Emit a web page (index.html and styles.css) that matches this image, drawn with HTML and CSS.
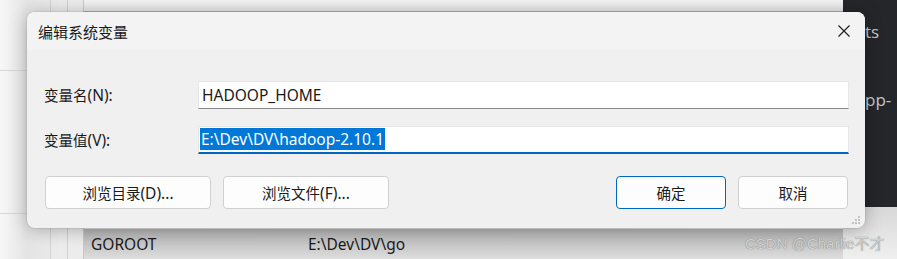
FILE: index.html
```html
<!DOCTYPE html>
<html>
	<head>
		<meta charset="utf-8" />
		<title>编辑系统变量</title>
		<link rel="stylesheet" href="styles.css">
	</head>
	<body>
		<div class="desk">
			<!-- 背景里的环境变量窗口 -->
			<div class="list">
				<div class="list_head"></div>
				<div class="col c1"></div>
				<div class="col c2"></div>
				<div class="col c3"></div>
				<div class="hline h1"></div>
				<div class="hline h2"></div>
			</div>
			<div class="side">
				<span class="side_t1">ts</span>
				<span class="side_t2">pp-</span>
			</div>
			<div class="side_low"></div>
			<div class="row">
				<span class="row_name">GOROOT</span>
				<span class="row_val">E:\Dev\DV\go</span>
			</div>

			<!-- 对话框 -->
			<div class="dialog">
				<div class="dialog_title">
					<span>编辑系统变量</span>
					<svg class="close" width="12" height="12" viewBox="0 0 12 12">
						<path d="M0.5 0.5 L11.5 11.5 M11.5 0.5 L0.5 11.5" stroke="#1a1a1a" stroke-width="1.1" fill="none"/>
					</svg>
				</div>
				<div class="form">
					<label>变量名<span class="en">(N):</span></label>
					<div class="field">HADOOP_HOME</div>
					<label>变量值<span class="en">(V):</span></label>
					<div class="field focus"><span class="sel">E:\Dev\DV\hadoop-2.10.1</span></div>
				</div>
				<div class="btns">
					<button class="btn wide">浏览目录<span class="en">(D)...</span></button>
					<button class="btn wide">浏览文件<span class="en">(F)...</span></button>
					<button class="btn ok">确定</button>
					<button class="btn">取消</button>
				</div>
				<svg class="grip" width="10" height="10" viewBox="0 0 10 10">
					<rect x="7" y="1" width="2" height="2" fill="#c4c4c4"/>
					<rect x="4" y="4" width="2" height="2" fill="#c4c4c4"/>
					<rect x="7" y="4" width="2" height="2" fill="#c4c4c4"/>
					<rect x="1" y="7" width="2" height="2" fill="#c4c4c4"/>
					<rect x="4" y="7" width="2" height="2" fill="#c4c4c4"/>
					<rect x="7" y="7" width="2" height="2" fill="#c4c4c4"/>
				</svg>
			</div>

			<div class="mark">CSDN @Charlie不才</div>
		</div>
	</body>
</html>
```
FILE: styles.css
```css
*{margin: 0;padding: 0;box-sizing: border-box;}
body{width: 897px;height: 259px;overflow: hidden;background: #f4f4f4;
	font-family: "Noto Sans", "Noto Sans CJK SC", sans-serif;font-size: 14.5px;color: #1a1a1a;}
.en{font-size: 15.5px;}
.desk{position: relative;width: 897px;height: 259px;overflow: hidden;
	background: linear-gradient(90deg, #f7f7f7 0, #e4e4e4 27px, #ececec 60px, #f3f3f3 100%);}

/* 背景窗口 */
.list{position: absolute;left: 0;top: 0;width: 843px;height: 259px;}
.list_head{position: absolute;left: 83px;top: 0;right: 0;height: 12px;
	background: linear-gradient(#f4f4f4, #e6e6e6);border-bottom: 1px solid #b4b4b4;}
.col{position: absolute;top: 0;bottom: 0;width: 1px;background: #d2d2d2;}
.c1{left: 50px;}
.c2{left: 67px;}
.c3{left: 83px;background: #c8c8c8;}
.hline{position: absolute;left: 0;width: 50px;height: 1px;background: #d6d6d6;}
.h1{top: 70px;}
.h2{top: 213px;}
.side{position: absolute;left: 843px;top: 0;width: 54px;height: 207px;background: #25262a;
	font-family: "Open Sans", sans-serif;font-size: 17px;color: #c3c6cc;}
.side_t1{position: absolute;left: 22px;top: 20px;}
.side_t2{position: absolute;left: 22px;top: 88px;}
.side_low{position: absolute;left: 843px;top: 207px;width: 54px;height: 52px;
	background: linear-gradient(#d8d8d8, #efefef);}
.row{position: absolute;left: 84px;top: 229px;width: 759px;height: 30px;font-size: 15.5px;
	background: linear-gradient(#b4b4b4, #cfcfcf 70%, #dedede);display: flex;align-items: center;}
.row_name{margin-left: 7px;width: 217px;}
.mark{position: absolute;left: 745px;top: 232px;font-family: "Liberation Sans", "Noto Sans CJK SC", sans-serif;
	font-size: 15px;color: #d2d2d2;text-shadow: 0 0 1px #6a6a6a;}

/* 对话框 */
.dialog{position: absolute;left: 27px;top: 12px;width: 838px;height: 216px;background: #f0f0f0;
	border-radius: 8px;box-shadow: 0 2px 18px rgba(0,0,0,.28), 0 0 0 1px rgba(0,0,0,.06);}
.dialog_title{height: 38px;background: #f3f3f3;border-radius: 8px 8px 0 0;display: flex;align-items: center;
	justify-content: space-between;padding: 0 15px 0 11px;font-size: 15px;}
.form{display: grid;grid-template-columns: 154px 651px;row-gap: 17px;padding: 31px 0 0 17px;align-items: center;}
.field{height: 28px;background: #fff;border: 1px solid #e6e6e6;border-bottom-color: #868686;
	padding: 0 0 0 3px;line-height: 26px;font-size: 15.5px;}
.field.focus{border-bottom: 2px solid #0067c0;line-height: 24px;padding-left: 1px;}
.sel{display: inline-block;background: #0078d7;color: #fff;padding: 0 1px;line-height: 22px;}
.btns{display: flex;gap: 12px;padding: 22px 17px 0 18px;}
.btn{width: 110px;height: 33px;background: #fdfdfd;border: 1px solid #d0d0d0;border-radius: 4px;
	font-family: "Noto Sans", "Noto Sans CJK SC", sans-serif;font-size: 14.5px;color: #1a1a1a;}
.btn.wide{width: 166px;}
.btn.ok{margin-left: auto;border-color: #0067c0;}
.grip{position: absolute;right: 4px;bottom: 3px;}
```
